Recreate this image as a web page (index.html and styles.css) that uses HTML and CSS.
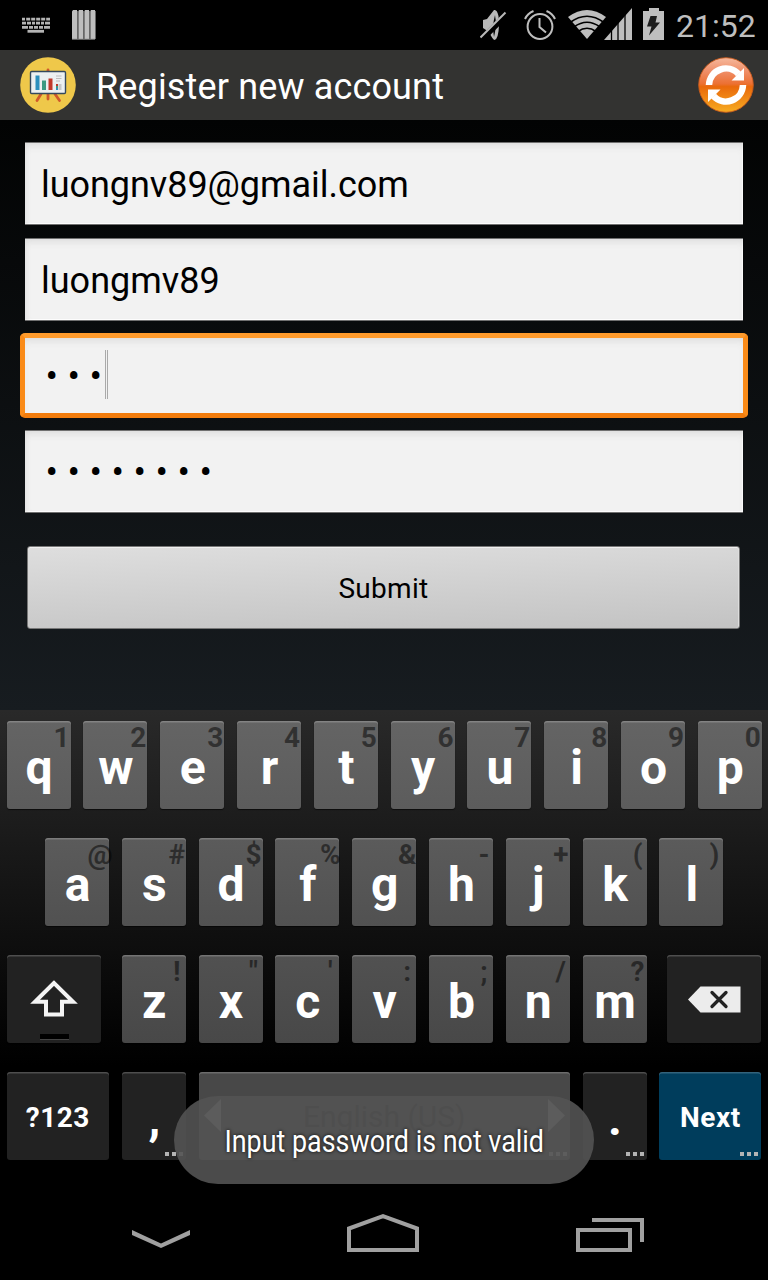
FILE: index.html
```html
<!DOCTYPE html>
<html lang="en">
<head>
<meta charset="utf-8">
<title>Register new account</title>
<link rel="stylesheet" href="styles.css">
</head>
<body>
<div class="screen">
  <header class="status">
    <svg class="ic-keyboard" width="30" height="18" viewBox="0 0 30 18"><g stroke="#b4b4b4" stroke-width="2.800" fill="none"><path d="M1 2.200H29" stroke-dasharray="3 1.200 4 1 4 1 4 1 4 1 4 1"/><path d="M1 6.200H29" stroke-dasharray="4 1 4 1 3 1 4 1 3 1 5 1"/><path d="M1 10.400H29" stroke-dasharray="6 1 4 1 4 1 4 1 6 1"/><path d="M6.500 14.300H23"/></g></svg>
    <svg class="ic-bars" width="24" height="30" viewBox="0 0 24 30"><path fill="#bebebe" d="M0 1.500 1 0H5V29H0zM6.300 1.500 7 0H11V29H6.300zM12.300 1.500 13 0H17V29H12.300zM18.300 1.500 19 0H23V29H18.300z"/><path fill="#666" d="M5 1h1.300v28H5zM11 1h1.300v28H11zM17 1h1.300v28H17zM23 1h1v28h-1z"/><path stroke="#777" d="M0 29.300H23"/></svg>
    <span class="spacer"></span>
    <svg class="ic-mute" width="28" height="32" viewBox="0 0 28 32"><path fill="#b9b9b9" d="M3 11 7 10 14 1Q17 0 18.500 7L19 16Q18.500 30 14.500 31Q13 31 9 23L3 19z"/><path fill="#000" d="M15 6Q17 16 14 28Q12 17 15 6z"/><path stroke="#000" stroke-width="6" d="M2 30 27 5"/><path stroke="#b9b9b9" stroke-width="2" d="M0.500 28.500 25.500 3.500"/></svg>
    <svg class="ic-alarm" width="32" height="32" viewBox="0 0 32 32" fill="none" stroke="#bebebe" stroke-width="2"><circle cx="16" cy="17.500" r="12.400"/><path d="M15.500 9v9l6.500 5.500M1 10Q3.500 4.500 9.500 2M31 10Q28.500 4.500 22.500 2"/></svg>
    <svg class="ic-wifi" width="38" height="30" viewBox="0 0 38 30"><path fill="#bebebe" d="M0 7Q19-7 38 7L19 29z"/><g fill="none" stroke="#000" stroke-width="1.700"><path d="M2 12.500Q19 0 36 12.500M6 17Q19 7.500 32 17M10 21.500Q19 15 28 21.500"/></g></svg>
    <svg class="ic-signal" width="28" height="32" viewBox="0 0 28 32"><path fill="#bebebe" d="M28 0V32H0z"/><path stroke="#000" stroke-width="1.300" d="M7.500 18V32M14 12V32M21 5V32"/></svg>
    <svg class="ic-battery" width="21" height="32" viewBox="0 0 21 32"><path fill="#bebebe" d="M6 0h10v3h5v29H0V3h6z"/><path fill="#1c1c1c" d="M7.500 8H14L12.500 14.500H17L6 27.500 8.500 18.500H4z"/></svg>
    <span class="clock">21:52</span>
  </header>

  <div class="appbar">
    <svg class="logo" width="56" height="56" viewBox="0 0 56 56"><circle cx="28" cy="28" r="27.800" fill="#efc84a"/><g stroke="#d0592b" stroke-width="2.800" stroke-linecap="round"><path d="M28 13V16M28 36V42M21 37 17 43.500M35 37 39.500 43.500"/></g><rect x="10.500" y="14.500" width="35" height="22" rx="1.200" fill="#ecf0f1" stroke="#34495e" stroke-width="1.400"/><path fill="#2b8fbd" d="M15.500 18.500h4V33h-4z"/><path fill="#3a9a82" d="M22 23.500h4V33h-4z"/><path fill="#c0392b" d="M28.500 21.500h4V33h-4z"/><path stroke="#bcbcbc" d="M36 19H41.500M36 21.500H41.500M36 24H40"/><path stroke="#bbb" stroke-width="1.500" d="M38.500 28H41.500M38.500 30H41.500M38.500 32H41.500"/><path stroke="#c0392b" stroke-width="1.800" d="M36 28H38"/><path stroke="#3a9a82" stroke-width="1.800" d="M36 30H38"/><path stroke="#2b8fbd" stroke-width="1.800" d="M36 32H38"/></svg>
    <h1 class="title"><span class="title-text">Register new account</span></h1>
    <svg class="refresh" width="56" height="56" viewBox="0 0 56 56"><defs><linearGradient id="orb" x2="0" y2="1"><stop offset="0" stop-color="#f6b99d"/><stop offset=".25" stop-color="#ef8e68"/><stop offset=".48" stop-color="#ec7032"/><stop offset=".53" stop-color="#e9690b"/><stop offset="1" stop-color="#f7ac22"/></linearGradient></defs><circle cx="28" cy="28" r="27.300" fill="url(#orb)" stroke="#c85a1c" stroke-width=".9"/><g fill="none" stroke="#fff" stroke-width="6.500"><path d="M11 28A17 17 0 0 1 40.500 17"/><path d="M45 28A17 17 0 0 1 15.500 39"/></g><path fill="#fff" d="M46 11V23.500H33.500zM10 45V32.500H22.500z"/></svg>
  </div>

  <main class="form">
    <div class="field"><span class="email">luongnv89@gmail.com</span></div>
    <div class="field"><span class="user">luongmv89</span></div>
    <div class="field focused"><span class="dots">•••</span><span class="caret"></span></div>
    <div class="field"><span class="dots">••••••••</span></div>
    <button class="submit" type="button"><span class="submit-text">Submit</span></button>
  </main>

  <section class="keyboard">
    <div class="row">
      <div class="key">q<i>1</i></div><div class="key">w<i>2</i></div><div class="key">e<i>3</i></div><div class="key">r<i>4</i></div><div class="key">t<i>5</i></div><div class="key">y<i>6</i></div><div class="key">u<i>7</i></div><div class="key">i<i>8</i></div><div class="key">o<i>9</i></div><div class="key">p<i>0</i></div>
    </div>
    <div class="row home">
      <div class="key">a<i>@</i></div><div class="key">s<i>#</i></div><div class="key">d<i>$</i></div><div class="key">f<i>%</i></div><div class="key">g<i>&amp;</i></div><div class="key">h<i>-</i></div><div class="key">j<i>+</i></div><div class="key">k<i>(</i></div><div class="key">l<i>)</i></div>
    </div>
    <div class="row third">
      <div class="key dark shift"><svg width="48" height="37" viewBox="0 0 48 37"><path fill="none" stroke="#f4f4f4" stroke-width="4" d="M24 3 5 21.800H16V34.500H32V21.800H43z"/></svg><b class="lock"></b></div>
      <div class="key">z<i>!</i></div><div class="key">x<i>"</i></div><div class="key">c<i>'</i></div><div class="key">v<i>:</i></div><div class="key">b<i>;</i></div><div class="key">n<i>/</i></div><div class="key">m<i>?</i></div>
      <div class="key dark del"><svg width="53" height="27" viewBox="0 0 53 27"><path fill="#ececec" d="M0 13.500 12.500.500H52.500V26.500H12.500z"/><path stroke="#222" stroke-width="3.300" stroke-linecap="round" d="M24 6.500 38 20.500M38 6.500 24 20.500"/></svg></div>
    </div>
    <div class="row">
      <div class="key dark wide">?123</div>
      <div class="key dark">,<b class="more"></b></div>
      <div class="key space"><svg width="17" height="33" viewBox="0 0 17 33"><path fill="#aaa" d="M17 0V33L0 16.500z"/></svg><span class="lang">English (US)</span><svg width="17" height="33" viewBox="0 0 17 33"><path fill="#aaa" d="M0 0V33L17 16.500z"/></svg><b class="more"></b></div>
      <div class="key dark">.<b class="more"></b></div>
      <div class="key wide next">Next<b class="more"></b></div>
    </div>
    <div class="toast"><span class="toast-text">Input password is not valid</span></div>
  </section>

  <nav class="navbar">
    <svg width="58" height="20" viewBox="0 0 58 20"><path fill="#a0a0a0" d="M0 1 29 14.500 58 1V6L29 19 0 6z"/></svg>
    <svg width="72" height="38" viewBox="0 0 72 38"><path fill="none" stroke="#a0a0a0" stroke-width="4" d="M2 36V14.500L36 2.200 70 14.500V36z"/></svg>
    <svg width="68" height="34" viewBox="0 0 68 34"><path fill="none" stroke="#a0a0a0" stroke-width="4" d="M2 12H54V32H2zM16 2H66V24"/></svg>
  </nav>
</div>
</body>
</html>
```
FILE: styles.css
```css
* { box-sizing: border-box; }
body { margin: 0; background: #000; font-family: Roboto, "Liberation Sans", sans-serif; }
svg { display: block; flex: none; }
.screen { width: 768px; height: 1280px; display: flex; flex-direction: column; overflow: hidden; background: #000; }

.status { height: 50px; display: flex; align-items: flex-start; padding: 0 11px 0 21px; }
.ic-keyboard { margin-top: 17px; }
.ic-bars { margin: 10px 0 0 21px; }
.spacer { flex: 1; }
.ic-mute { margin: 9px 16px 0 0; }
.ic-alarm { margin: 9px 12px 0 0; }
.ic-wifi { margin-top: 10px; }
.ic-signal { margin: 8px 11px 0 -2px; }
.ic-battery { margin-top: 8px; }
.clock { width: 81px; margin-left: 12px; font-size: 32px; line-height: 52px; color: #bebebe; }

.appbar { height: 70px; background: #333331; display: flex; align-items: center; padding: 0 14px 0 20px; }
.title { flex: 1; margin: 0 0 0 20px; font-size: 36px; line-height: 70px; font-weight: 400; color: #fff; padding-top: 3px; letter-spacing: .15px; }
.title-text, .email, .user, .submit-text, .toast-text { display: inline-block; white-space: nowrap; }

.form { height: 590px; padding: 22px 20px 0; background: linear-gradient(#020303, #171c20); }
.field { height: 83px; margin: 0 5px 13px; padding: 2px 0 0 16px; display: flex; align-items: center; background: #f2f2f2; border: 1px solid #707070; border-width: 1px 0; box-shadow: inset 0 6px 9px -4px #d9d9d9, inset 4px 0 6px -4px #ddd, inset -1px 0 #fff, inset 0 -1px #fff; font-size: 36px; color: #000; }
.email { letter-spacing: -.05px; }
.focused { position: relative; height: 85px; margin: -1px 0 12px; padding: 2px 0 0 16px; border: 5px solid #f98c17; border-color: #ff9b2c #fa8b18 #f27c0c; border-radius: 5px; box-shadow: inset 0 6px 9px -4px #d9d9d9; }
.dots { font-size: 37px; letter-spacing: 9.500px; margin-left: 4.500px; }
.caret { position: absolute; left: 80px; top: 12px; width: 3px; height: 49px; border: 1px solid #aaa; border-width: 0 1px; }
.submit { display: block; width: 713px; height: 83px; margin: 33px 7px 0; padding: 1px 0 0; border: 1px solid #777; border-radius: 3px; background: linear-gradient(178deg, #dedede, #c3c3c3); box-shadow: inset 0 1px #efefef, inset -1px 0 #ddd; font: 28px Roboto, sans-serif; letter-spacing: .3px; color: #000; }

.keyboard { position: relative; height: 474px; padding: 11px 6.600px 0; background: linear-gradient(#292929, #000 75%); display: flex; flex-direction: column; gap: 29px; }
.row { display: flex; gap: 12.800px; height: 88px; }
.home { padding-left: 38.400px; }
.key { position: relative; flex: none; width: 64px; height: 88px; padding-left: 1px; border-radius: 3px; display: flex; justify-content: center; color: #fff; font-size: 48px; font-weight: 700; line-height: 93px; background: linear-gradient(#646464, #5c5c5c); box-shadow: inset 0 1.500px rgba(255,255,255,.2), 0 1px 1px rgba(0,0,0,.6); }
.home .key { background: linear-gradient(#5b5b5b, #515151); }
.third .key { background: linear-gradient(#515151, #484848); }
.key i { position: absolute; right: -16px; top: 0; width: 50px; text-align: center; font-style: normal; font-size: 28px; line-height: 33px; color: rgba(0,0,0,.5); }
.row .dark { background: #222; }
.row .shift { width: 94.400px; margin-right: 8px; }
.row .del { width: 94.400px; margin-left: 7.200px; }
.shift svg { margin-top: 25px; }
.del svg { margin: 31px 0 0 1px; }
.lock { position: absolute; left: 33px; bottom: 3px; width: 29px; height: 6px; background: #000; border-bottom: 1px solid #444; }
.row .wide { width: 102.400px; font-size: 28px; line-height: 91px; letter-spacing: .5px; padding: 0; }
.row .next { width: 102px; background: #003d5c; }
.row .space { width: 371.200px; justify-content: space-between; padding: 0 5px; background: #484848; }
.space svg { margin-top: 27px; }
.lang { font-size: 30px; font-weight: 400; line-height: 89px; color: #222; }
.more { position: absolute; right: 3px; bottom: 4px; width: 18px; height: 4px; background: repeating-linear-gradient(90deg, #b4b4b4 0 4px, transparent 4px 7px); }
.toast { position: absolute; left: 174px; top: 386px; width: 420px; height: 88px; border-radius: 44px; background: rgba(83,83,83,.9); display: flex; align-items: center; justify-content: center; font-size: 32px; color: #fff; padding-top: 2px; text-shadow: 0 0 4px #000; }
.toast-text { transform: scaleX(.84); }

.navbar { height: 96px; display: flex; align-items: flex-start; justify-content: space-between; padding: 30px 124px 0 132px; }
.navbar svg:first-child { margin-top: 15px; }
.navbar svg:last-child { margin-top: 4px; }
```
